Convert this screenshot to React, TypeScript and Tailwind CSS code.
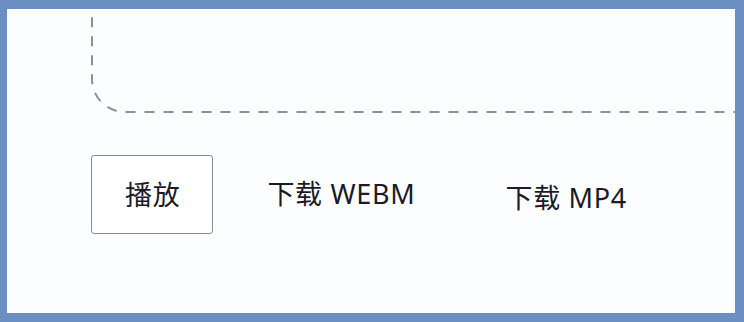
export default function App() {
  return (
    <div className="h-[322px] w-[744px] bg-[#6b8ec3] pt-[9px] pl-[7px] pr-[9px] pb-[9px]">
      <div className="h-full overflow-hidden bg-[#fcfdff] pl-[84px] font-['Noto_Sans','Noto_Sans_CJK_SC',sans-serif] text-[#1b1a26]">
        {/* drop zone, top and right run past the panel */}
        <div className="relative -mt-[100px] -mr-[60px] h-[204px]">
          <svg className="absolute inset-0 h-full w-full" preserveAspectRatio="none">
            <rect
              x="1"
              y="1"
              width="calc(100% - 2px)"
              height="202"
              rx="33"
              fill="none"
              stroke="#8f8f98"
              strokeWidth="2"
              strokeDasharray="10 9"
            />
          </svg>
        </div>

        <div className="mt-[42px] flex items-center gap-5 text-[27px] leading-none tracking-[0.7px]">
          <button className="h-[79px] rounded-[3px] border border-[#8c8b98] bg-white pl-[33px] pr-[32px]">
            播放
          </button>
          <button className="h-[79px] pl-[34px] pr-[36px] pb-[2px]">下载 WEBM</button>
          <button className="h-[79px] px-[34px] pt-[6px]">下载 MP4</button>
        </div>
      </div>
    </div>
  );
}
